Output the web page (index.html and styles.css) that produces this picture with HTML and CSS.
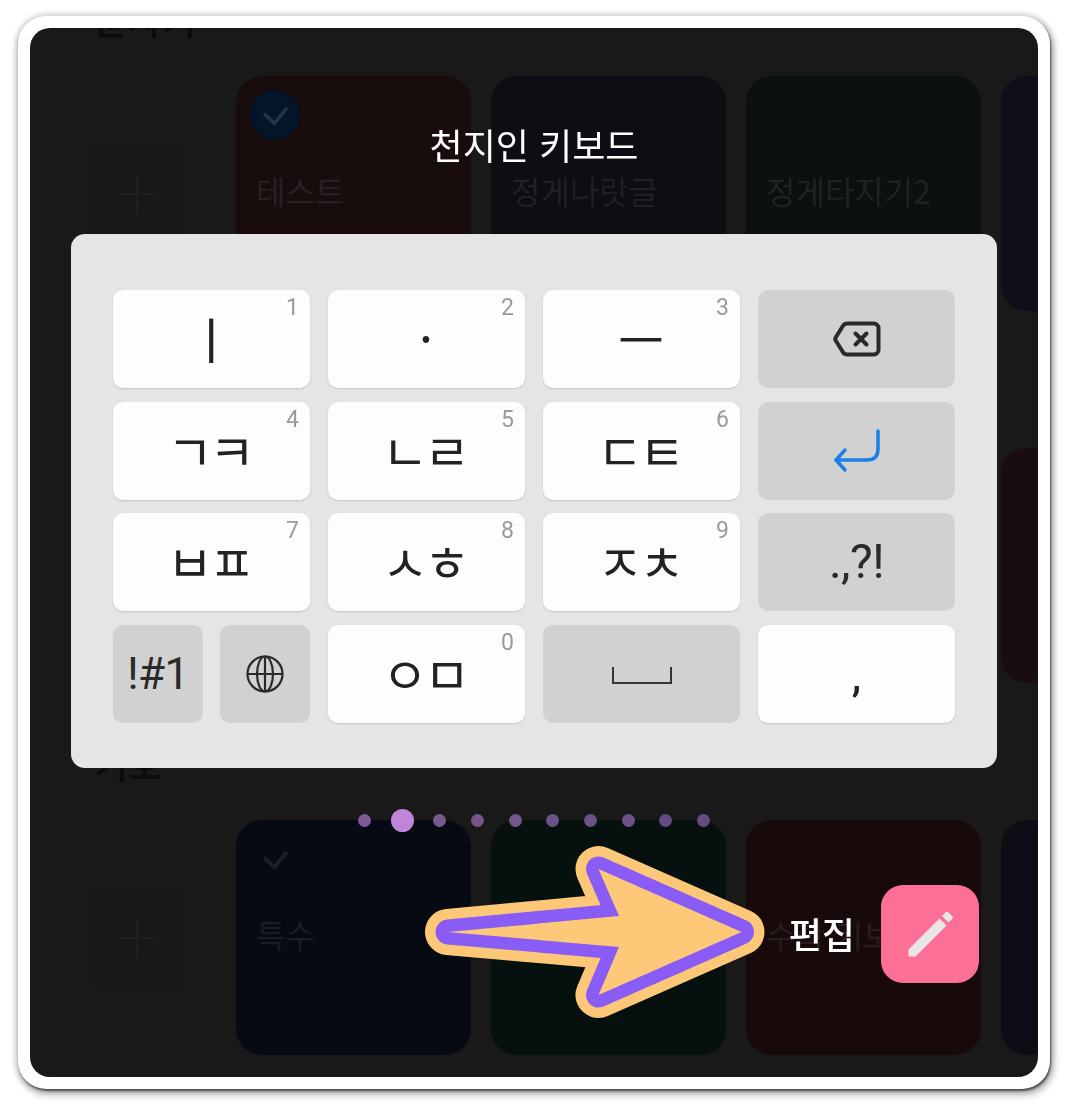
FILE: index.html
```html
<!DOCTYPE html>
<html lang="ko">
<head>
<meta charset="utf-8">
<title>천지인 키보드</title>
<link rel="stylesheet" href="styles.css">
</head>
<body>
<div class="frame">
  <div class="screen">
    <div class="backdrop">
      <section class="row">
        <h2 class="heading">문자키</h2>
        <div class="plus-box"><span class="plus"></span></div>
        <div class="tile tile-red">
          <span class="check-circle"><svg class="check" viewBox="0 0 28 22"><path d="M2 9l11 10L26 3"/></svg></span>
          <p class="tile-label">테스트</p>
        </div>
        <div class="tile tile-violet"><p class="tile-label">정게나랏글</p></div>
        <div class="tile tile-green"><p class="tile-label">정게타지기2</p></div>
        <div class="tile tile-navy"></div>
      </section>
      <section class="row">
        <div class="plus-box"><span class="plus"></span></div>
        <div class="tile"></div>
        <div class="tile"></div>
        <div class="tile"></div>
        <div class="tile tile-wine"></div>
      </section>
      <section class="row">
        <h2 class="heading">기호</h2>
        <div class="plus-box"><span class="plus"></span></div>
        <div class="tile tile-blue">
          <span class="check-plain"><svg class="check" viewBox="0 0 28 22"><path d="M2 9l11 10L26 3"/></svg></span>
          <p class="tile-label">특수</p>
        </div>
        <div class="tile tile-teal"></div>
        <div class="tile tile-maroon"><p class="tile-label">수학 키보드</p></div>
        <div class="tile tile-ink"></div>
      </section>
    </div>

    <div class="modal">
      <h1 class="title">천지인 키보드</h1>
      <div class="panel">
        <div class="key"><span class="jamo">ㅣ</span><span class="num">1</span></div>
        <div class="key"><span class="jamo">·</span><span class="num">2</span></div>
        <div class="key"><span class="jamo">ㅡ</span><span class="num">3</span></div>
        <div class="key key-fn">
          <svg class="ico-back" viewBox="0 0 48 36"><path d="M14 2.5H41a4.5 4.5 0 0 1 4.5 4.5V29a4.5 4.5 0 0 1-4.5 4.5H14q-2 0-3.5-1.5L3 20q-1.5-2 0-4L10.5 4Q12 2.500 14 2.500z"/><path d="M22.500 12.500l11 11M33.500 12.500l-11 11"/></svg>
        </div>
        <div class="key"><span class="jamo">ㄱㅋ</span><span class="num">4</span></div>
        <div class="key"><span class="jamo">ㄴㄹ</span><span class="num">5</span></div>
        <div class="key"><span class="jamo">ㄷㅌ</span><span class="num">6</span></div>
        <div class="key key-fn">
          <svg class="ico-enter" viewBox="0 0 48 44"><path d="M45 2V20q0 11-11 11H3"/><path d="M12 21L3 31l9 10"/></svg>
        </div>
        <div class="key"><span class="jamo">ㅂㅍ</span><span class="num">7</span></div>
        <div class="key"><span class="jamo">ㅅㅎ</span><span class="num">8</span></div>
        <div class="key"><span class="jamo">ㅈㅊ</span><span class="num">9</span></div>
        <div class="key key-fn"><span class="sym sym-punct">.,?!</span></div>
        <div class="key-pair">
          <div class="key key-fn"><span class="sym">!#1</span></div>
          <div class="key key-fn">
            <svg class="ico-globe" viewBox="0 0 38 38"><circle cx="19" cy="19" r="17.500"/><ellipse cx="19" cy="19" rx="8" ry="17.500"/><path d="M19 1.500v35M1.500 19h35"/></svg>
          </div>
        </div>
        <div class="key"><span class="jamo">ㅇㅁ</span><span class="num">0</span></div>
        <div class="key key-fn">
          <svg class="ico-space" viewBox="0 0 60 17"><path d="M1 0V16H59V0"/></svg>
        </div>
        <div class="key"><span class="comma">,</span></div>
      </div>
      <div class="dots">
        <span class="dot-cell"><i class="dot d1"></i></span>
        <span class="dot-cell"><i class="dot dot-on"></i></span>
        <span class="dot-cell"><i class="dot d2"></i></span>
        <span class="dot-cell"><i class="dot d3"></i></span>
        <span class="dot-cell"><i class="dot d3"></i></span>
        <span class="dot-cell"><i class="dot d4"></i></span>
        <span class="dot-cell"><i class="dot d4"></i></span>
        <span class="dot-cell"><i class="dot d4"></i></span>
        <span class="dot-cell"><i class="dot d5"></i></span>
        <span class="dot-cell"><i class="dot d5"></i></span>
      </div>
      <div class="edit-row">
        <span class="edit-label">편집</span>
        <button class="edit-btn" type="button">
          <svg class="ico-pencil" viewBox="0 0 98 98"><path d="M27.500 64.500L58.500 33.500l7 7-31 31H27.500z"/><path d="M61 31l4-4q1-1 2 0l4.500 4.500q1 1 0 2l-4 4z"/></svg>
        </button>
      </div>
    </div>

    <svg class="arrow" viewBox="30 28 1008 1049">
      <polygon class="a-outer" points="448,932 619,916 598.500,869 741.500,932 598.500,995 619,947"/>
      <polygon class="a-mid" points="448,932 619,916 598.500,869 741.500,932 598.500,995 619,947"/>
      <polygon class="a-fill" points="448,932 619,916 598.500,869 741.500,932 598.500,995 619,947"/>
    </svg>
  </div>
</div>
</body>
</html>
```

FILE: styles.css
```css
* { box-sizing: border-box; }
html, body { margin: 0; padding: 0; background: #fff; }
body { width: 1068px; height: 1109px; overflow: hidden; font-family: "Noto Sans CJK KR", "Noto Sans", sans-serif; }

.frame {
  width: 1032px;
  height: 1073px;
  margin: 16px 18px 20px;
  padding: 12px;
  background: #fff;
  border-radius: 28px;
  box-shadow: 1px 2px 2px rgba(0,0,0,.55), 2px 4px 7px 2px rgba(0,0,0,.28), 0 0 5px 3px rgba(0,0,0,.1);
}
.screen {
  position: relative;
  width: 1008px;
  height: 1049px;
  background: #191919;
  border-radius: 20px;
  overflow: hidden;
}

/* dimmed page behind the dialog */
.backdrop {
  position: absolute;
  inset: 0;
  display: flex;
  flex-direction: column;
  gap: 137px;
  padding-top: 48px;
  filter: blur(.6px);
}
.row {
  position: relative;
  display: flex;
  align-items: center;
  height: 235px;
  padding-left: 57px;
  gap: 20px;
  flex-wrap: nowrap;
}
.heading {
  position: absolute;
  left: 64px;
  bottom: calc(100% + 35px);
  margin: 0;
  font-size: 37px;
  line-height: 1.2;
  font-weight: 500;
  color: #0b0b0b;
  white-space: nowrap;
}
.plus-box {
  flex: none;
  width: 100px;
  height: 102px;
  margin-right: 29px;
  display: flex;
  align-items: center;
  justify-content: center;
  border-radius: 12px;
  background: #181818;
}
.plus { position: relative; display: block; width: 38px; height: 38px; }
.plus::before, .plus::after { content: ""; position: absolute; background: #1f1f1f; }
.plus::before { left: 0; right: 0; top: 18px; height: 2px; }
.plus::after { top: 0; bottom: 0; left: 18px; width: 2px; }

.tile {
  position: relative;
  flex: none;
  width: 235px;
  height: 235px;
  border-radius: 26px;
  background: #141414;
}
.tile-red { background: #190c0d; }
.tile-violet { background: #100c14; }
.tile-green { background: #0c1110; }
.tile-navy { background: #0e0f18; }
.tile-wine { background: #190c12; }
.tile-blue { background: #060a13; }
.tile-teal { background: #06100e; }
.tile-maroon { background: #180a0b; }
.tile-ink { background: #0d0d16; }

.tile-label {
  position: absolute;
  left: 20px;
  top: 93px;
  margin: 0;
  font-size: 32px;
  line-height: 42px;
  color: #272022;
  white-space: nowrap;
}
.tile-violet .tile-label { color: #221e27; }
.tile-green .tile-label { color: #1f2422; }
.tile-blue .tile-label { color: #191d26; }
.tile-maroon .tile-label { color: #281d1e; }

.check-circle, .check-plain {
  position: absolute;
  left: 14px;
  top: 14px;
  width: 50px;
  height: 50px;
  display: flex;
  align-items: center;
  justify-content: center;
  border-radius: 50%;
}
.check-circle { background: #04152a; }
.check { width: 27px; height: 21px; fill: none; stroke: #28313d; stroke-width: 4; }
.check-plain .check { stroke: #1a202a; }

/* dialog */
.modal {
  position: absolute;
  inset: 0;
  display: flex;
  flex-direction: column;
  align-items: center;
  padding-top: 88px;
}
.title {
  margin: 0 0 62px;
  height: 56px;
  font-size: 36px;
  line-height: 56px;
  font-weight: 400;
  color: #fff;
}
.panel {
  width: 926px;
  height: 534px;
  padding: 56px 41px 45px 42px;
  display: grid;
  grid-template-columns: repeat(4, 197px);
  grid-auto-rows: 98px;
  column-gap: 18px;
  row-gap: 13.67px;
  background: #e5e5e5;
  border-radius: 14px;
}
.key {
  position: relative;
  display: flex;
  align-items: center;
  justify-content: center;
  background: #fdfdfd;
  border-radius: 10px;
  box-shadow: 0 1px 2px rgba(0,0,0,.14);
  color: #222;
}
.key-fn { background: #d1d1d1; box-shadow: none; }
.key-pair { display: flex; gap: 17px; }
.key-pair .key { flex: 1; }

.jamo {
  font-size: 50px;
  line-height: 1;
  letter-spacing: -4px;
  margin: -4px 0 0 -5px;
  color: #222;
}
.num {
  position: absolute;
  top: 4px;
  right: 11px;
  font-family: Roboto, "Liberation Sans", sans-serif;
  font-size: 23px;
  line-height: 28px;
  color: #9a9a9a;
}
.sym {
  font-family: Roboto, "Liberation Sans", sans-serif;
  font-size: 44px;
  line-height: 1;
  letter-spacing: -.5px;
  color: #2a2a2a;
}
.sym-punct { font-size: 48px; letter-spacing: -.5px; }
.comma {
  font-family: Roboto, "Liberation Sans", sans-serif;
  font-size: 42px;
  line-height: 1;
  font-weight: 500;
  margin-top: 6px;
}

.ico-back { width: 48px; height: 36px; fill: none; stroke: #2a2a2a; stroke-width: 4; stroke-linecap: round; stroke-linejoin: round; }
.ico-enter { width: 48px; height: 44px; fill: none; stroke: #1a7fe8; stroke-width: 3.500; stroke-linecap: round; stroke-linejoin: round; }
.ico-globe { width: 38px; height: 38px; fill: none; stroke: #2a2a2a; stroke-width: 2.200; }
.ico-space { width: 60px; height: 17px; margin-top: 3px; fill: none; stroke: #333; stroke-width: 2; }

.dots { display: flex; margin-top: 40px; height: 24px; }
.dot-cell { width: 37.700px; display: flex; align-items: center; justify-content: center; }
.dot { display: block; width: 13px; height: 13px; border-radius: 50%; }
.dot-on { width: 23px; height: 23px; background: #c084d8; }
.d1 { background: #7d5a95; }
.d2 { background: #79598f; }
.d3 { background: #74568c; }
.d4 { background: #6c5087; }
.d5 { background: #664b80; }

.edit-row {
  align-self: stretch;
  display: flex;
  justify-content: flex-end;
  align-items: center;
  gap: 26px;
  margin-top: 53px;
  padding-right: 59px;
}
.edit-label { font-size: 36px; font-weight: 500; color: #fff; line-height: 44px; margin-top: -2px; }
.edit-btn {
  width: 98px;
  height: 98px;
  padding: 0;
  border: 0;
  border-radius: 22px;
  background: #fc6f97;
  display: block;
}
.ico-pencil { display: block; width: 98px; height: 98px; fill: #e6e6e6; }

/* annotation arrow over the screenshot */
.arrow { position: absolute; left: 0; top: 0; width: 1008px; height: 1049px; pointer-events: none; }
.arrow polygon { stroke-linejoin: round; }
.a-outer { fill: #fdc778; stroke: #fdc778; stroke-width: 46px; }
.a-mid { fill: #8a5cf6; stroke: #8a5cf6; stroke-width: 25px; }
.a-fill { fill: #fdc978; stroke: none; }
```
